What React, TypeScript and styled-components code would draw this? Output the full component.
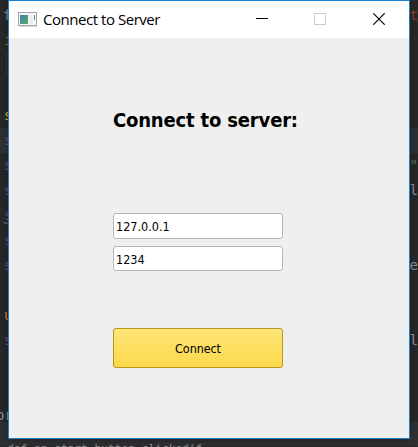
import React from "react";
import styled, { createGlobalStyle } from "styled-components";

const Global = createGlobalStyle`
  * { box-sizing: border-box; }
  body { margin: 0; overflow: hidden; background: #282828; }
`;

const Desktop = styled.main`
  position: relative;
  width: 418px;
  height: 447px;
  overflow: hidden;
  background: #282828;
`;

const Editor = styled.div`
  position: absolute;
  inset: 3px 0 auto;
  font: 14px/25px "DejaVu Sans Mono", monospace;
`;

const CodeRow = styled.div<{ $active?: boolean }>`
  display: flex;
  justify-content: space-between;
  height: 25px;
  white-space: pre;
  background: ${p => (p.$active ? "#303133" : "transparent")};
`;

const Code = styled.span<{ $color: string; $indent?: number }>`
  color: ${p => p.$color};
  margin-left: ${p => p.$indent ?? 0}px;
`;

const IndentGuide = styled.div`
  position: absolute;
  top: 49px;
  left: 6px;
  width: 1px;
  height: 25px;
  background: #393939;
`;

const WarningMark = styled.svg`
  position: absolute;
  top: 218px;
  left: 3px;
`;

const FooterRow = styled.div`
  height: 24px;
  margin-top: -6px;
  padding: 19px 0 0 7px;
  background: #303133;
  color: #8b939b;
  font: 11.2px/15px "DejaVu Sans Mono", monospace;
  white-space: pre;
`;

const Window = styled.section`
  position: relative;
  width: 402px;
  height: 439px;
  margin-left: 8px;
  border: 1px solid #1c80cc;
  background: #efefef;
  box-shadow: 0 2px 8px rgba(0, 0, 0, 0.3);
`;

const TitleBar = styled.header`
  display: flex;
  align-items: center;
  height: 37px;
  padding: 0 1px 0 9px;
  background: #fff;
`;

const Title = styled.h1`
  width: 122px;
  margin: -2px 0 0 6px;
  font: 400 15px/20px "Open Sans", sans-serif;
  letter-spacing: -0.46px;
  white-space: nowrap;
  color: #000;
`;

const Controls = styled.div`
  display: flex;
  margin: -2px 0 0 auto;
`;

const ControlButton = styled.button`
  display: grid;
  place-items: center;
  width: 58.5px;
  height: 37px;
  padding: 0;
  border: 0;
  background: transparent;
`;

const Form = styled.form`
  display: flex;
  flex-direction: column;
  width: 170px;
  margin: 68px 0 0 104px;
`;

const Heading = styled.h2`
  height: 28px;
  margin: 0 0 79px;
  font: 700 20px/28px "DejaVu Sans Condensed", "DejaVu Sans", sans-serif;
  font-stretch: condensed;
  letter-spacing: -0.17px;
  white-space: nowrap;
  color: #000;
`;

const Field = styled.input<{ $height: number }>`
  width: 170px;
  height: ${p => p.$height}px;
  margin: 0 0 7px;
  padding: 1px 2px 0;
  border: 1px solid #b5b5b5;
  border-radius: 3px;
  outline: 0;
  background: #fff;
  color: #000;
  font: 12.5px "DejaVu Sans Condensed", "DejaVu Sans", sans-serif;
  font-stretch: condensed;
`;

const ConnectButton = styled.button`
  height: 40px;
  margin-top: 50px;
  padding: 1px 0 0;
  border: 1px solid #b8961a;
  border-radius: 3px;
  background: linear-gradient(#fee578, #fbd84b);
  color: #000;
  font: 12.5px "DejaVu Sans Condensed", "DejaVu Sans", sans-serif;
  font-stretch: condensed;
  letter-spacing: -0.1px;
`;

type Line = { left?: string; color?: string; indent?: number; right?: string; rightColor?: string; active?: boolean };

const lines: Line[] = [
  { left: "f", color: "#8790a0", indent: 3, right: "t", rightColor: "#8e442c" },
  { left: "i", color: "#a56b27", indent: 4 },
  {},
  {},
  { left: "s", color: "#d0ad5d", indent: 4 },
  { left: "s", color: "#79477f", indent: 4, active: true },
  { left: "s", color: "#79477f", indent: 4, right: '"', rightColor: "#52754c" },
  { left: "s", color: "#79477f", indent: 4, right: "l", rightColor: "#8d929b" },
  { left: "s", color: "#79477f", indent: 4 },
  { left: "s", color: "#79477f", indent: 4 },
  { left: "s", color: "#79477f", indent: 4, right: "e", rightColor: "#8d929b" },
  {},
  { left: "u", color: "#c58b3b", indent: 4 },
  { left: "s", color: "#79477f", indent: 4, right: "l", rightColor: "#8d929b" },
  {},
  {},
  { left: "or", color: "#8d929b", indent: -4 },
];

const AppIcon = () => (
  <svg width="19" height="15" viewBox="0 0 19 15" shapeRendering="crispEdges" aria-hidden="true">
    <defs>
      <linearGradient id="pane" x1="0" y1="0" x2="1" y2="1">
        <stop offset="0" stopColor="#4779a8" />
        <stop offset="1" stopColor="#50b267" />
      </linearGradient>
    </defs>
    <rect x=".5" y=".5" width="18" height="13" fill="#f7f7f7" stroke="#a0a5a7" />
    <rect x="2" y="3" width="8" height="9" fill="url(#pane)" />
    <path d="M11 3h4v9h-4z" fill="#ededed" />
    <path d="M16 3h1v5h-1z" fill="#4b9b83" />
    <path d="M1 14h18" stroke="#dedede" />
  </svg>
);

export default function App() {
  return (
    <Desktop>
      <Global />
      <Editor aria-hidden="true">
        {lines.map((line, index) => (
          <CodeRow key={index} $active={line.active}>
            <Code $color={line.color ?? "transparent"} $indent={line.indent}>{line.left}</Code>
            <Code $color={line.rightColor ?? "transparent"}>{line.right}</Code>
          </CodeRow>
        ))}
        <FooterRow>def on_start_button_clicked(f</FooterRow>
        <IndentGuide />
        <WarningMark width="6" height="4"><path d="M0 .5l2 2 2-1 2 2" fill="none" stroke="#8b8267" /></WarningMark>
      </Editor>
      <Window>
        <TitleBar>
          <AppIcon />
          <Title>Connect to Server</Title>
          <Controls>
            <ControlButton aria-label="Minimize">
              <svg width="12" height="12" shapeRendering="crispEdges"><path d="M0 5.5h12" stroke="#000" /></svg>
            </ControlButton>
            <ControlButton aria-label="Maximize" disabled>
              <svg width="12" height="12" shapeRendering="crispEdges"><rect x=".5" y=".5" width="11" height="11" fill="none" stroke="#ccc" /></svg>
            </ControlButton>
            <ControlButton aria-label="Close">
              <svg width="12" height="12"><path d="M.3.3l11.4 11.4M11.7.3.3 11.7" stroke="#000" strokeWidth="1.15" /></svg>
            </ControlButton>
          </Controls>
        </TitleBar>
        <Form onSubmit={event => event.preventDefault()}>
          <Heading>Connect to server:</Heading>
          <Field $height={26} defaultValue="127.0.0.1" aria-label="Server address" />
          <Field $height={25} defaultValue="1234" aria-label="Port" />
          <ConnectButton>Connect</ConnectButton>
        </Form>
      </Window>
    </Desktop>
  );
}
